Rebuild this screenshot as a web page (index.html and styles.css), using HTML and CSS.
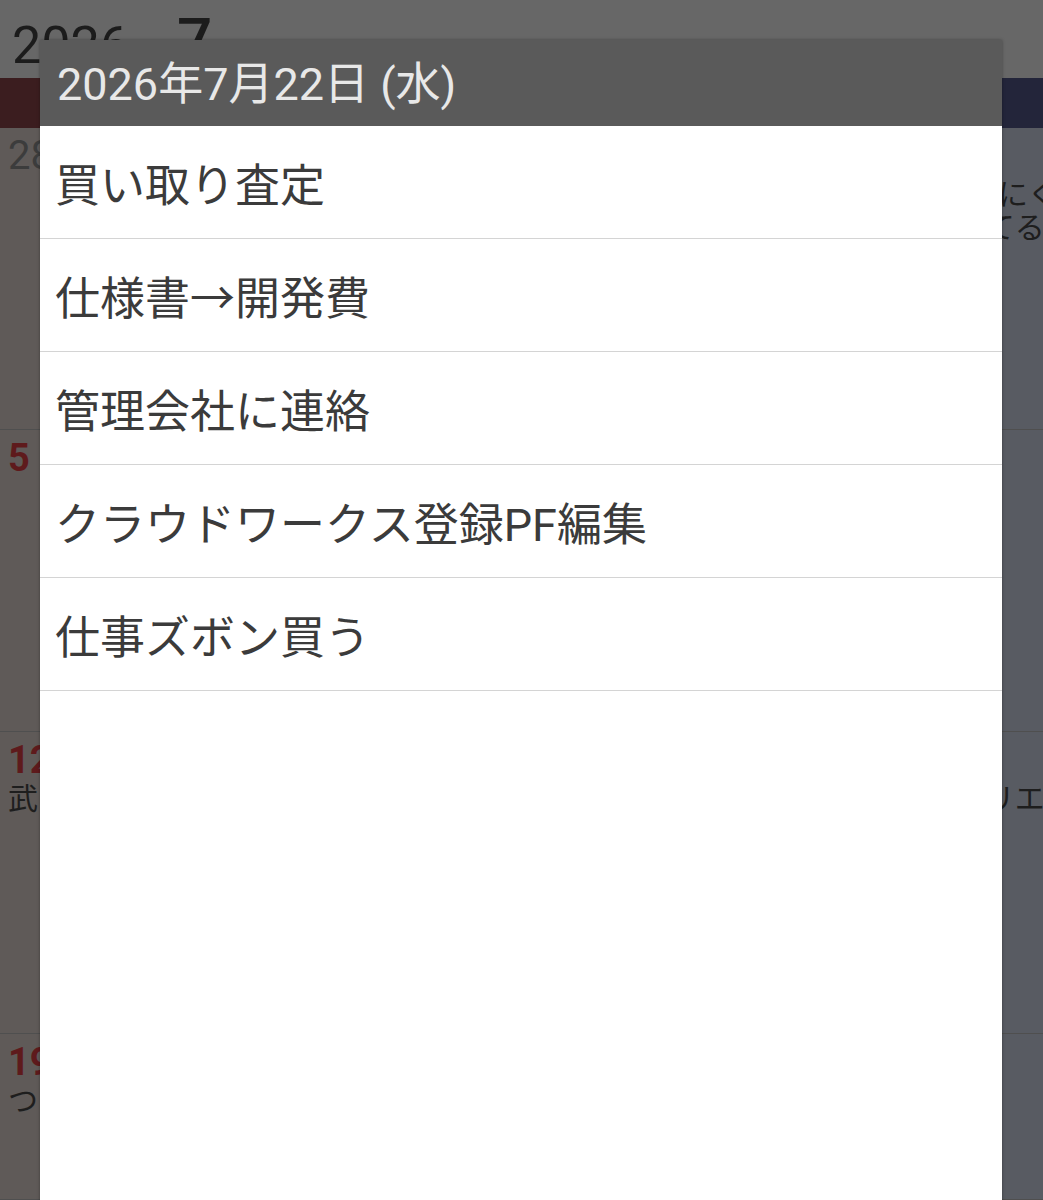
FILE: index.html
```html
<!DOCTYPE html>
<html lang="ja">
<head>
<meta charset="utf-8">
<title>カレンダー</title>
<link rel="stylesheet" href="styles.css">
</head>
<body>
<div class="app">
  <header class="top">
    <span class="year">2026</span><span class="month">7</span>
  </header>
  <div class="weekdays">
    <div class="wd sun"></div><div class="wd"></div><div class="wd"></div><div class="wd"></div><div class="wd"></div><div class="wd"></div><div class="wd sat"></div>
  </div>
  <div class="weeks">
    <div class="week">
      <div class="cell sun"><span class="num prev">28</span></div>
      <div class="cell"></div><div class="cell"></div><div class="cell"></div><div class="cell"></div><div class="cell"></div>
      <div class="cell sat"><span class="num"></span><p class="ev">鍵取りにくる</p><p class="ev">3人来てる</p></div>
    </div>
    <div class="week">
      <div class="cell sun"><span class="num red">5</span></div>
      <div class="cell"></div><div class="cell"></div><div class="cell"></div><div class="cell"></div><div class="cell"></div>
      <div class="cell sat"><span class="num"></span></div>
    </div>
    <div class="week">
      <div class="cell sun"><span class="num red">12</span><p class="ev">武田</p></div>
      <div class="cell"></div><div class="cell"></div><div class="cell"></div><div class="cell"></div><div class="cell"></div>
      <div class="cell sat"><span class="num"></span><p class="ev">1月のリエ</p></div>
    </div>
    <div class="week">
      <div class="cell sun"><span class="num red">19</span><p class="ev">つ</p></div>
      <div class="cell"></div><div class="cell"></div><div class="cell"></div><div class="cell"></div><div class="cell"></div>
      <div class="cell sat"><span class="num"></span></div>
    </div>
  </div>
</div>

<div class="dialog">
  <div class="dialog-title">2026年7月22日 (水)</div>
  <ul class="list">
    <li class="item">買い取り査定</li>
    <li class="item">仕様書→開発費</li>
    <li class="item">管理会社に連絡</li>
    <li class="item">クラウドワークス登録PF編集</li>
    <li class="item">仕事ズボン買う</li>
  </ul>
</div>
</body>
</html>
```

FILE: styles.css
```css
* { box-sizing: border-box; }
html, body {
  margin: 0;
  padding: 0;
  height: 1200px;
  overflow: hidden;
  background: #666666;
  font-family: Roboto, "Noto Sans CJK JP", sans-serif;
}

.app {
  display: flex;
  flex-direction: column;
  height: 1200px;
}

.top {
  height: 78px;
  background: #676767;
  display: flex;
  align-items: flex-end;
  padding: 0 0 6px 12px;
  color: #1c1c1c;
}
.year { font-size: 52px; line-height: 1; }
.month { font-size: 62px; line-height: 1; margin-left: 48px; font-weight: 500; }

.weekdays {
  display: grid;
  grid-template-columns: repeat(7, 1fr);
  height: 50px;
  background: #636363;
}
.wd.sun { background: #3b1d1f; }
.wd.sat { background: #23253a; }

.weeks {
  flex: 1;
  display: grid;
  grid-template-rows: 302px 302px 302px 1fr;
}
.week {
  display: grid;
  grid-template-columns: repeat(7, 1fr);
  border-bottom: 1px solid #4f4f4f;
}
.cell {
  background: #666666;
  padding: 6px 8px;
  overflow: hidden;
}
.cell.sun { background: #5f5a58; border-right: 1px solid #555; }
.cell.sat { background: #585b62; border-left: 1px solid #505257; padding-left: 13px; }

.num {
  display: block;
  height: 44px;
  font-size: 38px;
  line-height: 44px;
  font-weight: 700;
  color: #3a3a3a;
}
.num.prev { font-weight: 400; color: #3c3c3c; font-size: 40px; }
.num.red { color: #5e1a1c; }

.ev {
  margin: 0;
  font-size: 30px;
  line-height: 33px;
  color: #1e1e1e;
  white-space: nowrap;
}

.dialog {
  position: absolute;
  left: 40px;
  top: 40px;
  width: 962px;
  height: 1180px;
  background: #ffffff;
  box-shadow: 0 0 3px rgba(0,0,0,0.35);
}
.dialog-title {
  height: 86px;
  background: #5a5a5a;
  color: #e8e8e8;
  font-size: 45px;
  line-height: 86px;
  padding-left: 17px;
  padding-top: 2px;
}
.list {
  list-style: none;
  margin: 0;
  padding: 0;
}
.item {
  height: 113px;
  border-bottom: 1px solid #d4d4d4;
  display: flex;
  align-items: center;
  padding-left: 15px;
  font-size: 45px;
  color: #3b3b3b;
  white-space: nowrap;
}
```
